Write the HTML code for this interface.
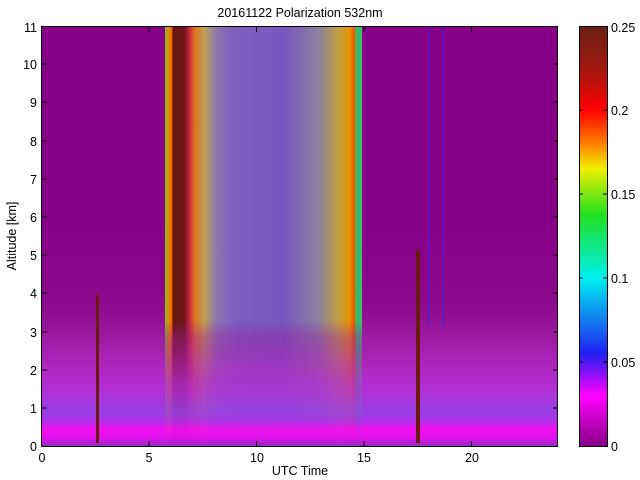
<!DOCTYPE html>
<html><head><meta charset="utf-8"><style>
html,body{margin:0;padding:0;background:#fff;width:640px;height:480px;overflow:hidden}
svg{display:block}
text{font-family:"Liberation Sans",sans-serif;font-size:12.5px;fill:#000}
</style></head><body>
<svg width="640" height="480" viewBox="0 0 640 480">
<defs>
<linearGradient id="bl" x1="0" y1="0" x2="0" y2="1">
<stop offset="0" stop-color="#880088" stop-opacity="0"/>
<stop offset="0.4" stop-color="#901090" stop-opacity="0.5"/>
<stop offset="0.55" stop-color="#9a1aa0"/>
<stop offset="0.68" stop-color="#b026c0"/>
<stop offset="0.78" stop-color="#b030d8"/>
<stop offset="0.86" stop-color="#9840e4"/>
<stop offset="0.9" stop-color="#b030e8"/>
<stop offset="0.93" stop-color="#f010f0"/>
<stop offset="0.97" stop-color="#e010ec"/>
<stop offset="1" stop-color="#9030c0"/>
</linearGradient>
<linearGradient id="cl" x1="0" y1="0" x2="1" y2="0">
<stop offset="0" stop-color="#80c020"/>
<stop offset="0.02" stop-color="#e09000"/>
<stop offset="0.035" stop-color="#f06000"/>
<stop offset="0.04" stop-color="#681810"/>
<stop offset="0.1" stop-color="#701818"/>
<stop offset="0.12" stop-color="#c02040"/>
<stop offset="0.15" stop-color="#e07020"/>
<stop offset="0.2" stop-color="#c0a050"/>
<stop offset="0.26" stop-color="#8c78b0"/>
<stop offset="0.35" stop-color="#7c60c0"/>
<stop offset="0.6" stop-color="#7658c0"/>
<stop offset="0.78" stop-color="#8a80a0"/>
<stop offset="0.88" stop-color="#c0a040"/>
<stop offset="0.94" stop-color="#e89000"/>
<stop offset="0.96" stop-color="#f05000"/>
<stop offset="0.97" stop-color="#40c040"/>
<stop offset="0.985" stop-color="#30b0a0"/>
<stop offset="1" stop-color="#40d030"/>
</linearGradient>
<linearGradient id="cf" x1="0" y1="0" x2="0" y2="1">
<stop offset="0" stop-color="#fff" stop-opacity="1"/>
<stop offset="0.7" stop-color="#fff" stop-opacity="1"/>
<stop offset="0.74" stop-color="#fff" stop-opacity="0.6"/>
<stop offset="0.85" stop-color="#fff" stop-opacity="0.2"/>
<stop offset="1" stop-color="#fff" stop-opacity="0"/>
</linearGradient>
<mask id="cm"><rect x="165" y="26" width="197" height="420" fill="url(#cf)"/></mask>
<linearGradient id="cb" x1="0" y1="0" x2="0" y2="1">
<stop offset="0" stop-color="#6a2014"/>
<stop offset="0.1" stop-color="#a01810"/>
<stop offset="0.2" stop-color="#ff0000"/>
<stop offset="0.28" stop-color="#ff8000"/>
<stop offset="0.34" stop-color="#f0f000"/>
<stop offset="0.45" stop-color="#20e020"/>
<stop offset="0.6" stop-color="#00f0f0"/>
<stop offset="0.78" stop-color="#2020f0"/>
<stop offset="0.88" stop-color="#ff00ff"/>
<stop offset="1" stop-color="#880088"/>
</linearGradient>
</defs>
<text x="300" y="17" text-anchor="middle">20161122 Polarization 532nm</text>
<rect x="41" y="26" width="517" height="420" fill="#880088"/>
<rect x="41" y="200" width="517" height="246" fill="url(#bl)"/>
<rect x="165" y="26" width="197" height="420" fill="url(#cl)" mask="url(#cm)"/>
<rect x="96" y="295" width="3" height="148" fill="#6a1a10"/>
<rect x="416" y="250" width="4" height="193" fill="#6a1a10"/>
<rect x="428" y="26" width="1" height="300" fill="#4020e0"/>
<rect x="443" y="26" width="1" height="300" fill="#4020e0"/>
<rect x="41.5" y="26.5" width="516" height="420" fill="none" stroke="#000"/>
<g stroke="#000">
<path d="M41.5 441v5M149 441v5M256.5 441v5M364 441v5M471.5 441v5M149 27v5M256.5 27v5M364 27v5M471.5 27v5"/>
<path d="M42 408h5M42 370h5M42 332h5M42 293h5M42 255h5M42 217h5M42 179h5M42 141h5M42 102h5M42 64h5M553 408h5M553 370h5M553 332h5M553 293h5M553 255h5M553 217h5M553 179h5M553 141h5M553 102h5M553 64h5"/>
</g>
<g text-anchor="end">
<text x="37" y="451">0</text><text x="37" y="413">1</text><text x="37" y="375">2</text><text x="37" y="337">3</text><text x="37" y="298">4</text><text x="37" y="260">5</text><text x="37" y="222">6</text><text x="37" y="184">7</text><text x="37" y="146">8</text><text x="37" y="107">9</text><text x="37" y="69">10</text><text x="37" y="32">11</text>
</g>
<g text-anchor="middle">
<text x="42" y="462">0</text><text x="149" y="462">5</text><text x="257" y="462">10</text><text x="364" y="462">15</text><text x="472" y="462">20</text>
<text x="300" y="475">UTC Time</text>
</g>
<text transform="translate(16,236) rotate(-90)" text-anchor="middle">Altitude [km]</text>
<rect x="579" y="26" width="28" height="420" fill="url(#cb)"/>
<rect x="579.5" y="26.5" width="28" height="420" fill="none" stroke="#000"/>
<g stroke="#000"><path d="M579 110h4M579 194h4M579 278h4M579 362h4M603 110h4M603 194h4M603 278h4M603 362h4"/></g>
<text x="611" y="32">0.25</text><text x="611" y="115">0.2</text><text x="611" y="199">0.15</text><text x="611" y="283">0.1</text><text x="611" y="367">0.05</text><text x="611" y="451">0</text>
</svg>
</body></html>
